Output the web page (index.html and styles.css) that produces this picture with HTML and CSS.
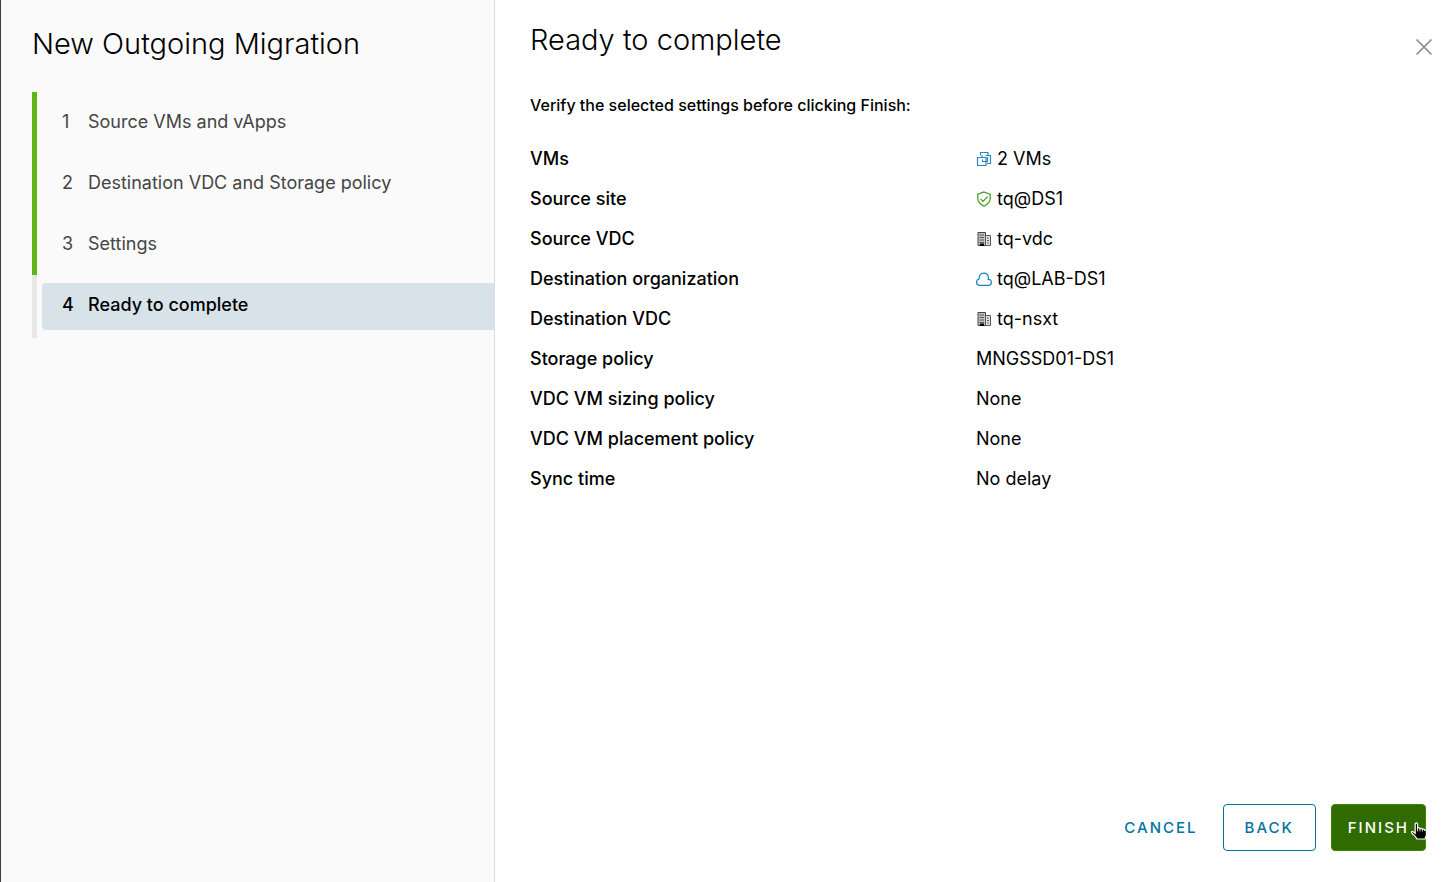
FILE: index.html
```html
<!DOCTYPE html>
<html lang="en">
<head>
<meta charset="utf-8">
<title>New Outgoing Migration</title>
<link rel="stylesheet" href="styles.css">
</head>
<body>
<svg class="sprite" aria-hidden="true">
  <symbol id="building" viewBox="0 0 16 16">
    <path d="M2 1.500h7.500v13H2z" fill="#c4c4c4" stroke="#444"/>
    <path d="M9.500 4.500h5v10h-5z" fill="#e4e4e4" stroke="#555"/>
    <path d="M3.500 4h4.500M3.500 6.500h4.500M3.500 9h4.500M3.500 11.500h4.500M11 7h2M11 9.500h2M11 12h2" stroke="#555"/>
    <path d="M4 12.500h4V15H4z" fill="#000"/>
  </symbol>
</svg>
<div class="wizard">
  <aside class="sidebar">
    <h1 class="title">New Outgoing Migration</h1>
    <ol class="steps">
      <li class="step done"><button type="button" class="step-button"><span class="number">1</span>Source VMs and vApps</button></li>
      <li class="step done"><button type="button" class="step-button"><span class="number">2</span>Destination VDC and Storage policy</button></li>
      <li class="step done"><button type="button" class="step-button"><span class="number">3</span>Settings</button></li>
      <li class="step"><button type="button" class="step-button current" aria-current="step"><span class="number">4</span>Ready to complete</button></li>
    </ol>
  </aside>
  <main class="content">
    <header class="header">
      <h2 class="title">Ready to complete</h2>
      <button type="button" class="close" aria-label="Close">
        <svg width="18" height="18" viewBox="0 0 18 18"><path d="M1.500 1.500l15 15M16.500 1.500l-15 15" fill="none" stroke="#8c8c8c" stroke-width="1.700"/></svg>
      </button>
    </header>
    <p class="intro">Verify the selected settings before clicking Finish:</p>
    <dl class="summary">
      <dt>VMs</dt>
      <dd><svg class="icon" viewBox="0 0 16 16" fill="none" stroke="#2a87bf" stroke-width="1.200"><path d="M4.500 4.500v-3h7.500v3"/><path d="M7 5H5M9.500 4.500h5v8h-3.500"/><path d="M1.500 6.500h8.500v8H1.500z"/><path d="M11.500 6v4.500H6.500V8.500"/></svg>2 VMs</dd>
      <dt>Source site</dt>
      <dd><svg class="icon" viewBox="0 0 16 16" fill="none" stroke="#42961a" stroke-width="1.200"><path d="M8 1l6.200 2.200v4.300c0 3.300-2.500 5.800-6.200 7.700-3.700-1.900-6.200-4.400-6.200-7.700V3.200z"/><path d="M4.500 7.800l2.500 2.500 4.600-4.600"/></svg>tq@DS1</dd>
      <dt>Source VDC</dt>
      <dd><svg class="icon"><use href="#building"/></svg>tq-vdc</dd>
      <dt>Destination organization</dt>
      <dd><svg class="icon" viewBox="0 0 16 16" fill="none" stroke="#1681bd" stroke-width="1.200"><path d="M3.800 14.400a3.200 3.200 0 0 1-.8-6.300C3 4.400 5 2.100 7.800 2.100s4.600 2.200 4.600 5.100c0 .5-.1.900-.2 1.300 1.900-.3 3.200.9 3.200 2.800 0 1.800-1.300 3.100-3 3.100z"/></svg>tq@LAB-DS1</dd>
      <dt>Destination VDC</dt>
      <dd><svg class="icon"><use href="#building"/></svg>tq-nsxt</dd>
      <dt>Storage policy</dt>
      <dd>MNGSSD01-DS1</dd>
      <dt>VDC VM sizing policy</dt>
      <dd>None</dd>
      <dt>VDC VM placement policy</dt>
      <dd>None</dd>
      <dt>Sync time</dt>
      <dd>No delay</dd>
    </dl>
    <footer class="footer">
      <button type="button" class="button link">CANCEL</button>
      <button type="button" class="button outline">BACK</button>
      <button type="button" class="button primary">FINISH
        <svg class="pointer" width="18" height="20" viewBox="0 0 18 20" aria-hidden="true"><path d="M5.200 2.200c0-1.700 2.400-1.700 2.400 0v4c.5-.8 2.200-.6 2.400.5.600-.8 2.200-.5 2.400.6.600-.6 2.100-.3 2.300.8.700-.2 1.700.1 1.700 1.300v3.300c0 1.700-1.300 2.500-1.300 4.300H6.800c-.4-2-2.200-3.200-4.400-5.300C.600 10.100 1.800 8.900 3.200 9.700l2 1.500z" fill="#000" stroke="#fff" stroke-width="1.200"/><path d="M7.600 6v3.500M10 7v2.500M12.400 7.500v2" stroke="#fff" stroke-width=".8"/></svg>
      </button>
    </footer>
  </main>
</div>
</body>
</html>
```
FILE: styles.css
```css
* { box-sizing: border-box; }
body {
  margin: 0;
  font-family: Inter, "Liberation Sans", sans-serif;
  font-size: 18px;
  line-height: 24px;
  color: #000;
  background: #fff;
}
button { font: inherit; cursor: pointer; }
.sprite { display: none; }
.wizard {
  display: grid;
  grid-template-columns: 34% 1fr;
  min-height: 100vh;
}
.sidebar {
  padding: 26px 0 0 31px;
  background: #fafafa;
  border-left: 1px solid #3c3c40;
  border-right: 1px solid #dedede;
}
.title {
  margin: 0;
  font-size: 29px;
  line-height: 36px;
  font-weight: 300;
}
.steps {
  list-style: none;
  margin: 30px 0 0;
  padding: 0;
}
.step {
  padding: 8px 0 6px 5px;
  border-left: 5px solid #e8e8e8;
}
.step.done { border-left-color: #60b515; }
.step:last-child { padding-bottom: 8px; }
.step-button {
  display: flex;
  width: 100%;
  height: 47px;
  padding: 10px 0 0 20px;
  border: 0;
  border-radius: 4px 0 0 4px;
  background: transparent;
  color: #454545;
  text-align: left;
}
.step-button.current {
  background: #d8e3e9;
  color: #000;
  font-weight: 500;
}
.number { width: 26px; }
.content {
  display: flex;
  flex-direction: column;
  padding: 22px 30px 31px 35px;
}
.header {
  display: flex;
  justify-content: space-between;
}
.close {
  display: flex;
  align-self: flex-end;
  margin-right: -8px;
  padding: 0 1px 2px;
  border: 0;
  background: transparent;
}
.intro {
  margin: 35px 0 0;
  font-size: 16px;
  font-weight: 500;
}
.summary {
  display: grid;
  grid-template-columns: 1fr 1fr;
  grid-auto-rows: 40px;
  align-items: center;
  margin: 22px 4px 0 0;
}
.summary dt { font-weight: 500; }
.summary dd {
  display: flex;
  align-items: center;
  gap: 5px;
  margin: 0;
}
.icon { width: 16px; height: 16px; }
.footer {
  display: flex;
  gap: 15px;
  margin-top: auto;
  justify-content: flex-end;
}
.button {
  position: relative;
  height: 47px;
  padding: 0 16px;
  border: 1px solid transparent;
  border-radius: 4px;
  font-size: 15px;
  font-weight: 500;
  letter-spacing: 2px;
  background: transparent;
  color: #0072a3;
}
.button.link { padding: 0 9px; }
.button.outline { padding: 0 21px; border-color: #0072a3; }
.button.primary {
  background: #306b00;
  border-color: #3c8500;
  color: #fff;
}
.pointer {
  position: absolute;
  right: -3px;
  bottom: 8px;
}
```
